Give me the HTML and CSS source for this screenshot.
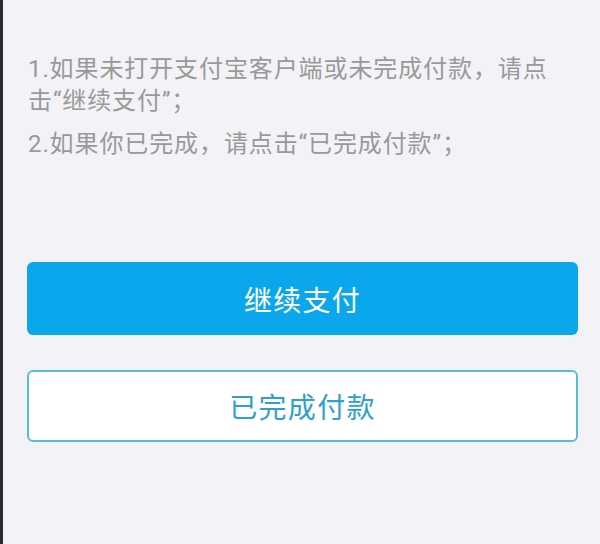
FILE: index.html
```html
<!DOCTYPE html>
<html lang="zh-CN">
<head>
<meta charset="utf-8">
<title>支付确认</title>
<link rel="stylesheet" href="styles.css">
</head>
<body>
<div class="page">
  <div class="tips">
    <p class="tip">1.如果未打开支付宝客户端或未完成付款，请点击“继续支付”；</p>
    <p class="tip tip-second">2.如果你已完成，请点击“已完成付款”；</p>
  </div>
  <div class="actions">
    <button class="btn btn-primary" type="button">继续支付</button>
    <button class="btn btn-outline" type="button">已完成付款</button>
  </div>
</div>
</body>
</html>
```
FILE: styles.css
```css
html, body {
  margin: 0;
  padding: 0;
  height: 100%;
}
body {
  background: #f3f3f7;
  border-left: 3px solid #2b2b2b;
  box-sizing: border-box;
  font-family: Roboto, "Noto Sans CJK SC", sans-serif;
}
.page {
  padding: 53px 22px 0 24px;
}
.tips {
  padding: 0 22px 0 1px;
}
.tip {
  margin: 0;
  font-size: 24px;
  line-height: 32px;
  letter-spacing: 0.9px;
  color: #999999;
}
.tip-second {
  margin-top: 11px;
}
.actions {
  display: flex;
  flex-direction: column;
  gap: 35px;
  margin-top: 102px;
}
.btn {
  display: block;
  width: 100%;
  border-radius: 6px;
  font-family: Roboto, "Noto Sans CJK SC", sans-serif;
  font-size: 28px;
  letter-spacing: 1.3px;
  cursor: pointer;
}
.btn-primary {
  height: 73px;
  background: #0ba7ec;
  border: none;
  color: #ffffff;
}
.btn-outline {
  height: 72px;
  background: #ffffff;
  border: 2px solid #58bcd9;
  color: #2f9fcd;
}
```
